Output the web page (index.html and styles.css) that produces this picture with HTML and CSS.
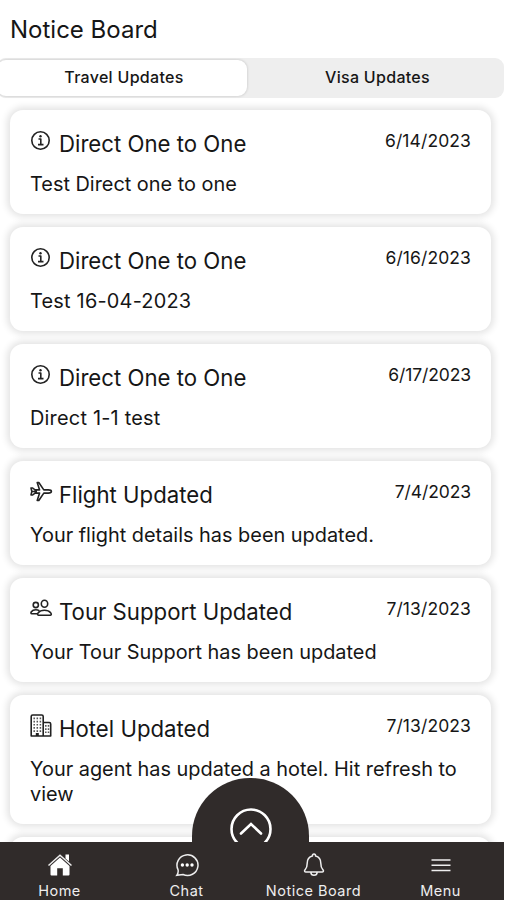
FILE: index.html
```html
<!DOCTYPE html>
<html lang="en">
<head>
<meta charset="UTF-8">
<meta name="viewport" content="width=device-width, initial-scale=1.0">
<title>Notice Board</title>
<link rel="stylesheet" href="styles.css">
</head>
<body>
<div class="screen">
    <h1>Notice Board</h1>
    <div class="tabs">
        <button class="tab active">Travel Updates</button>
        <button class="tab">Visa Updates</button>
    </div>
    <main class="notices">
        <section class="card">
            <div class="card-head">
                <svg class="icon" viewBox="0 0 22 22"><circle cx="10.5" cy="10.5" r="8.7"/><path d="M8.5 9h2.3v5.3M8 14.6h5.5"/><circle class="dot" cx="10.5" cy="6.2" r="1.2"/></svg>
                <h2>Direct One to One</h2>
                <time>6/14/2023</time>
            </div>
            <p>Test Direct one to one</p>
        </section>
        <section class="card">
            <div class="card-head">
                <svg class="icon" viewBox="0 0 22 22"><circle cx="10.5" cy="10.5" r="8.7"/><path d="M8.5 9h2.3v5.3M8 14.6h5.5"/><circle class="dot" cx="10.5" cy="6.2" r="1.2"/></svg>
                <h2>Direct One to One</h2>
                <time>6/16/2023</time>
            </div>
            <p class="numeric">Test 16-04-2023</p>
        </section>
        <section class="card">
            <div class="card-head">
                <svg class="icon" viewBox="0 0 22 22"><circle cx="10.5" cy="10.5" r="8.7"/><path d="M8.5 9h2.3v5.3M8 14.6h5.5"/><circle class="dot" cx="10.5" cy="6.2" r="1.2"/></svg>
                <h2>Direct One to One</h2>
                <time class="short">6/17/2023</time>
            </div>
            <p class="numeric">Direct 1-1 test</p>
        </section>
        <section class="card">
            <div class="card-head">
                <svg class="icon" viewBox="0 0 22 22"><path d="M7.2 1.5h1.6l5 7.4h4.4c2 0 3.2.7 3.2 1.6s-1.2 1.6-3.2 1.6h-4.4l-5 7.4H7.2l2.4-7.4H5L2.7 14H1l.9-3.5L1 7h1.700L5 8.900h4.600zM2 10.500h5"/></svg>
                <h2>Flight Updated</h2>
                <time class="short">7/4/2023</time>
            </div>
            <p>Your flight details has been updated.</p>
        </section>
        <section class="card">
            <div class="card-head">
                <svg class="icon" viewBox="0 0 22 22"><circle cx="5.8" cy="7" r="2.6"/><ellipse cx="14.5" cy="5.8" rx="3.2" ry="3.5"/><path d="M8.5 17.200c-2.200-.2-.5-4.900 5.900-4.900s8.200 4.700 6 4.900zM7.500 15.700H1.800c-2 0-.5-4 4-4 1.500 0 2.500.3 3.500.9"/></svg>
                <h2>Tour Support Updated</h2>
                <time>7/13/2023</time>
            </div>
            <p>Your Tour Support has been updated</p>
        </section>
        <section class="card tall">
            <div class="card-head">
                <svg class="icon hotel" viewBox="0 0 22 23"><path d="M1.200 22V2.500q0-1.500 1.500-1.500h9q1.500 0 1.500 1.500V22zM13.200 8.500h6q1.500 0 1.500 1.500v12h-7.500"/><path class="windows" d="M4.200 3.500v15M7.300 3.500v15M10.400 3.500v15M15.800 11v9M18.500 11v9"/><path class="door" d="M7.300 19v3"/></svg>
                <h2>Hotel Updated</h2>
                <time>7/13/2023</time>
            </div>
            <p>Your agent has updated a hotel. Hit refresh to view</p>
        </section>
        <section class="card"></section>
    </main>
    <nav class="navbar">
        <div class="drawer">
            <svg viewBox="0 0 44 44"><circle cx="22" cy="22" r="19.5"/><path d="M12 26.5 22 17l10 9.5"/></svg>
        </div>
        <a class="nav-item">
            <svg viewBox="0 0 26 24"><path class="solid" d="M13 4.500 3.500 13v8.500q0 1 1 1h5.700v-7.300h5.600v7.300h5.700q1 0 1-1V13z"/><path d="M1.500 12.500 13 2.200l11.500 10.300"/><path class="solid" d="M18.500 1.500H22v7l-3.500-3z"/></svg>
            <span>Home</span>
        </a>
        <a class="nav-item">
            <svg viewBox="0 0 26 24"><path d="M4 16.600A10.500 10.300 0 1 1 9 21.500L2.800 22.300C4 20.500 4.500 18.500 4 16.600z"/><circle class="solid" cx="8.400" cy="12" r="1.700"/><circle class="solid" cx="13.200" cy="12" r="1.700"/><circle class="solid" cx="18" cy="12" r="1.700"/></svg>
            <span>Chat</span>
        </a>
        <a class="nav-item">
            <svg viewBox="0 0 26 24"><path d="M11.400 3C11.400.4 14.600.4 14.600 3c3.800.9 5.200 4 5.200 7.300 0 4.600 1.100 5.300 2.300 6.700.8 1 .2 2-1 2H4.900c-1.200 0-1.800-1-1-2 1.200-1.400 2.300-2.100 2.300-6.700C6.200 7 7.600 3.900 11.400 3zM9.800 19.200c.3 4.200 6.100 4.200 6.400 0"/></svg>
            <span>Notice Board</span>
        </a>
        <a class="nav-item">
            <svg viewBox="0 0 26 24"><path d="M3.500 7h19M3.500 12.200h19M3.500 17.400h19"/></svg>
            <span>Menu</span>
        </a>
    </nav>
</div>
</body>
</html>
```

FILE: styles.css
```css
body {
    margin: 0;
    background-color: #fff;
    font-family: Inter, "Liberation Sans", sans-serif;
    color: #161616;
}
.screen {
    display: flex;
    flex-direction: column;
    width: 504px;
    height: 900px;
    overflow: hidden;
}
h1, h2, p {
    margin: 0;
    font-weight: 400;
}
h1 {
    flex: none;
    height: 58px;
    padding-left: 10px;
    box-sizing: border-box;
    font-size: 24px;
    line-height: 60px;
}
.tabs {
    display: flex;
    flex: none;
    height: 40px;
    margin-left: -3px;
    padding: 2px 0;
    box-sizing: border-box;
    border-radius: 9px;
    background-color: #eee;
}
.tab {
    flex: 1;
    padding: 0 0 2px 4px;
    border: none;
    border-radius: 9px;
    background: none;
    font: 500 16px/34px Inter, "Liberation Sans", sans-serif;
    letter-spacing: 0.3px;
    color: #161616;
}
.tab.active {
    flex: 0 0 250px;
    background-color: #fff;
    box-shadow: 0 0 3px rgba(0, 0, 0, 0.2);
}
.notices {
    display: flex;
    flex: 1;
    flex-direction: column;
    gap: 13px;
    min-height: 0;
    padding: 12px 13px 0 10px;
    overflow: hidden;
}
.card {
    flex: none;
    height: 104px;
    padding: 20px 20px 0;
    box-sizing: border-box;
    border-radius: 13px;
    background-color: #fff;
    box-shadow: 0 0 7px 3px rgba(0, 0, 0, 0.11);
}
.card.tall {
    height: 129px;
}
.card-head {
    display: flex;
    height: 28px;
}
.icon {
    flex: none;
    width: 22px;
    height: 22px;
    margin-right: 7px;
    fill: none;
    stroke: #222;
    stroke-width: 1.6;
    stroke-linejoin: round;
    overflow: visible;
}
.icon .dot {
    fill: #222;
    stroke: none;
}
.icon.hotel {
    height: 23px;
    margin-top: -1px;
}
.icon .windows {
    stroke-width: 1.5;
    stroke-dasharray: 1.7 1.5;
    stroke: #555;
}
.icon .door {
    stroke-width: 3;
}
h2 {
    flex: 1;
    font-size: 22.2px;
    line-height: 28px;
    white-space: nowrap;
}
time {
    font-size: 17.5px;
    letter-spacing: 0.1px;
    line-height: 22px;
}
time.short {
    letter-spacing: -0.1px;
}
.card p {
    margin-top: 14px;
    margin-right: -5px;
    font-size: 19.9px;
    line-height: 25px;
}
.card p.numeric {
    letter-spacing: 0.22px;
}
.navbar {
    position: relative;
    display: grid;
    grid-template-columns: repeat(4, 127px);
    flex: none;
    height: 58px;
    margin-left: -4px;
    padding-top: 11px;
    box-sizing: border-box;
    background-color: #302b2a;
    color: #eee;
}
/* round handle that rises above the bar */
.drawer {
    position: absolute;
    top: -64px;
    left: 196px;
    width: 117px;
    height: 64px;
    border-radius: 58px 58px 0 0;
    background-color: #302b2a;
    overflow: hidden;
}
.drawer svg {
    display: block;
    width: 44px;
    height: 44px;
    margin: 29px auto 0;
    fill: none;
    stroke: #fff;
    stroke-width: 2.6;
    stroke-linecap: round;
}
.nav-item {
    display: flex;
    flex-direction: column;
    align-items: center;
    font-size: 14.5px;
    letter-spacing: 0.5px;
    line-height: 20px;
}
.nav-item svg {
    width: 26px;
    height: 24px;
    margin-bottom: 4px;
    fill: none;
    stroke: #eee;
    stroke-width: 1.5;
}
.nav-item .solid {
    fill: #fff;
    stroke: none;
}
```
